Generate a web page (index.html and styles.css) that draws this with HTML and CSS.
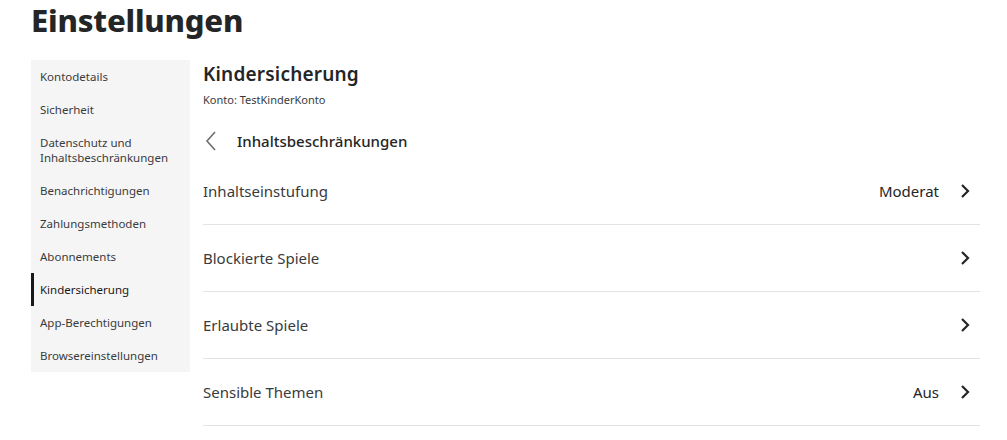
FILE: index.html
```html
<!DOCTYPE html>
<html lang="de">
<head>
    <meta charset="UTF-8">
    <title>Einstellungen</title>
    <link rel="stylesheet" href="styles.css">
</head>
<body>
    <h1 class="page-title">Einstellungen</h1>

    <div class="settings">
        <nav class="side-menu">
            <a class="menu-item" href="#">Kontodetails</a>
            <a class="menu-item" href="#">Sicherheit</a>
            <a class="menu-item" href="#">Datenschutz und Inhaltsbeschränkungen</a>
            <a class="menu-item" href="#">Benachrichtigungen</a>
            <a class="menu-item" href="#">Zahlungsmethoden</a>
            <a class="menu-item" href="#">Abonnements</a>
            <a class="menu-item active" href="#">Kindersicherung</a>
            <a class="menu-item" href="#">App-Berechtigungen</a>
            <a class="menu-item" href="#">Browsereinstellungen</a>
        </nav>

        <main class="content">
            <h2 class="section-title">Kindersicherung</h2>
            <p class="account">Konto: TestKinderKonto</p>

            <div class="back-row">
                <svg class="back-icon" width="12" height="20" viewBox="0 0 12 20">
                    <path d="M10 1 L2 10 L10 19" fill="none" stroke="#6b6e72" stroke-width="1.6"/>
                </svg>
                <span>Inhaltsbeschränkungen</span>
            </div>

            <ul class="option-list">
                <li class="option">
                    <span class="option-label">Inhaltseinstufung</span>
                    <span class="option-value">Moderat</span>
                    <svg class="chevron" width="10" height="16" viewBox="0 0 10 16"><path d="M2 2 L8 8 L2 14" fill="none" stroke="#232527" stroke-width="2.2"/></svg>
                </li>
                <li class="option">
                    <span class="option-label">Blockierte Spiele</span>
                    <svg class="chevron" width="10" height="16" viewBox="0 0 10 16"><path d="M2 2 L8 8 L2 14" fill="none" stroke="#232527" stroke-width="2.2"/></svg>
                </li>
                <li class="option">
                    <span class="option-label">Erlaubte Spiele</span>
                    <svg class="chevron" width="10" height="16" viewBox="0 0 10 16"><path d="M2 2 L8 8 L2 14" fill="none" stroke="#232527" stroke-width="2.2"/></svg>
                </li>
                <li class="option">
                    <span class="option-label">Sensible Themen</span>
                    <span class="option-value">Aus</span>
                    <svg class="chevron" width="10" height="16" viewBox="0 0 10 16"><path d="M2 2 L8 8 L2 14" fill="none" stroke="#232527" stroke-width="2.2"/></svg>
                </li>
            </ul>
        </main>
    </div>
</body>
</html>
```

FILE: styles.css
```css
* {
    margin: 0;
    padding: 0;
    box-sizing: border-box;
}

body {
    font-family: 'Noto Sans', sans-serif;
    color: #393b3d;
    background: #fff;
    padding: 0 27px 0 31px;
}

.page-title {
    font-family: 'Noto Sans', sans-serif;
    font-size: 31px;
    font-weight: 800;
    color: #232527;
    line-height: 40px;
    margin-bottom: 20px;
    letter-spacing: -0.2px;
}

.settings {
    display: flex;
    gap: 13px;
    align-items: flex-start;
}

/* Sidebar */
.side-menu {
    width: 159px;
    flex-shrink: 0;
    background: #f5f5f5;
    display: flex;
    flex-direction: column;
}

.menu-item {
    display: block;
    padding: 9px 8px 9px 6px;
    font-size: 11.5px;
    line-height: 15px;
    color: #393b3d;
    text-decoration: none;
    border-left: 3px solid transparent;
}

.menu-item.active {
    border-left-color: #191919;
    color: #191919;
}

/* Main */
.content {
    flex: 1;
}

.section-title {
    font-size: 19px;
    font-weight: 600;
    line-height: 28px;
    color: #232527;
    letter-spacing: 0.2px;
}

.account {
    font-size: 11px;
    line-height: 16px;
    margin-top: 4px;
    color: #393b3d;
}

.back-row {
    display: flex;
    align-items: center;
    height: 34px;
    margin-top: 16px;
    font-size: 15px;
    font-weight: 500;
    color: #232527;
}

.back-icon {
    margin-left: 2px;
    margin-right: 20px;
}

.option-list {
    list-style: none;
}

.option {
    display: flex;
    align-items: center;
    height: 67px;
    border-bottom: 1px solid #e3e3e3;
    padding-right: 10px;
    font-size: 15px;
}

.option-label {
    flex: 1;
    color: #393b3d;
}

.option-value {
    color: #232527;
    margin-right: 21px;
}

.chevron {
    flex-shrink: 0;
}
```
